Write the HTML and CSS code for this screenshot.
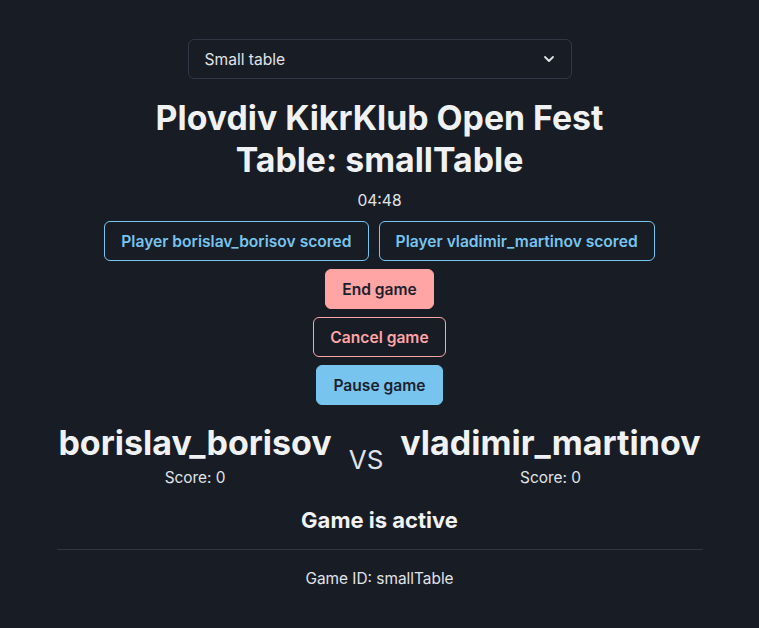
FILE: index.html
```html
<!DOCTYPE html>
<html lang="en">
<head>
<meta charset="utf-8">
<title>Game</title>
<link rel="stylesheet" href="styles.css">
</head>
<body>
<main class="page">
  <div class="select">
    <span>Small table</span>
    <svg class="chev" width="12" height="8" viewBox="0 0 12 8"><path d="M2 2l4 4 4-4" fill="none" stroke="#e0e3e7" stroke-width="1.8" stroke-linecap="round" stroke-linejoin="round"/></svg>
  </div>
  <h1 class="title">Plovdiv KikrKlub Open Fest<br>Table: smallTable</h1>
  <div class="timer">04:48</div>
  <div class="row">
    <button class="btn outline-blue">Player borislav_borisov scored</button>
    <button class="btn outline-blue">Player vladimir_martinov scored</button>
  </div>
  <div class="stack">
    <button class="btn fill-pink">End game</button>
    <button class="btn outline-pink">Cancel game</button>
    <button class="btn fill-blue">Pause game</button>
  </div>
  <div class="players">
    <div class="player">
      <div class="name">borislav_borisov</div>
      <div class="score">Score: 0</div>
    </div>
    <div class="vs">VS</div>
    <div class="player">
      <div class="name">vladimir_martinov</div>
      <div class="score">Score: 0</div>
    </div>
  </div>
  <h2 class="status">Game is active</h2>
  <hr class="rule">
  <div class="gameid">Game ID: smallTable</div>
</main>
</body>
</html>
```
FILE: styles.css
```css
html, body {
  margin: 0;
  padding: 0;
  background: #181c25;
  color: #e0e3e7;
  font-family: Inter, "Noto Sans", sans-serif;
}
.page {
  width: 646px;
  margin: 0 auto;
  padding-top: 39px;
  display: flex;
  flex-direction: column;
  align-items: center;
}
.select {
  width: 384px;
  height: 40px;
  box-sizing: border-box;
  border: 1px solid #2f3644;
  border-radius: 6px;
  display: flex;
  align-items: center;
  justify-content: space-between;
  padding: 0 16px;
  font-size: 15.6px;
  color: #e0e3e7;
}
.title {
  margin: 18px 0 0;
  font-size: 33.8px;
  line-height: 42px;
  font-weight: 700;
  text-align: center;
  color: #f0f1f3;
}
.timer {
  margin-top: 10px;
  font-size: 15.6px;
  line-height: 20px;
}
.row {
  margin-top: 10px;
  display: flex;
  gap: 10px;
}
.stack {
  margin-top: 8px;
  display: flex;
  flex-direction: column;
  align-items: center;
  gap: 8px;
}
.btn {
  height: 40px;
  box-sizing: border-box;
  padding: 0 16px;
  border-radius: 6px;
  font-family: Inter, "Noto Sans", sans-serif;
  font-size: 15.6px;
  font-weight: 600;
  background: transparent;
  border: 1px solid transparent;
}
.outline-blue { border-color: #77c5ef; color: #77c5ef; }
.fill-pink { background: #ffa5a5; border-color: #ffa5a5; color: #1c212c; }
.outline-pink { border-color: #ffa5a5; color: #ffa5a5; }
.fill-blue { background: #77c5ef; border-color: #77c5ef; color: #1c212c; }
.players {
  margin-top: 17px;
  display: flex;
  align-items: flex-start;
  justify-content: center;
  gap: 17px;
}
.player {
  display: flex;
  flex-direction: column;
  align-items: center;
}
.name {
  font-size: 34px;
  line-height: 42px;
  font-weight: 700;
  color: #f0f1f3;
}
.score {
  margin-top: 4px;
  font-size: 15.4px;
  line-height: 20px;
}
.vs {
  margin-top: 23px;
  font-size: 26px;
  line-height: 30px;
}
.status {
  margin: 18px 0 0;
  font-size: 22px;
  line-height: 28px;
  font-weight: 700;
  color: #f0f1f3;
}
.rule {
  width: 100%;
  margin: 15px 0 0;
  border: 0;
  border-top: 1px solid #2f3644;
}
.gameid {
  margin-top: 19px;
  font-size: 15.4px;
  line-height: 20px;
}
```
